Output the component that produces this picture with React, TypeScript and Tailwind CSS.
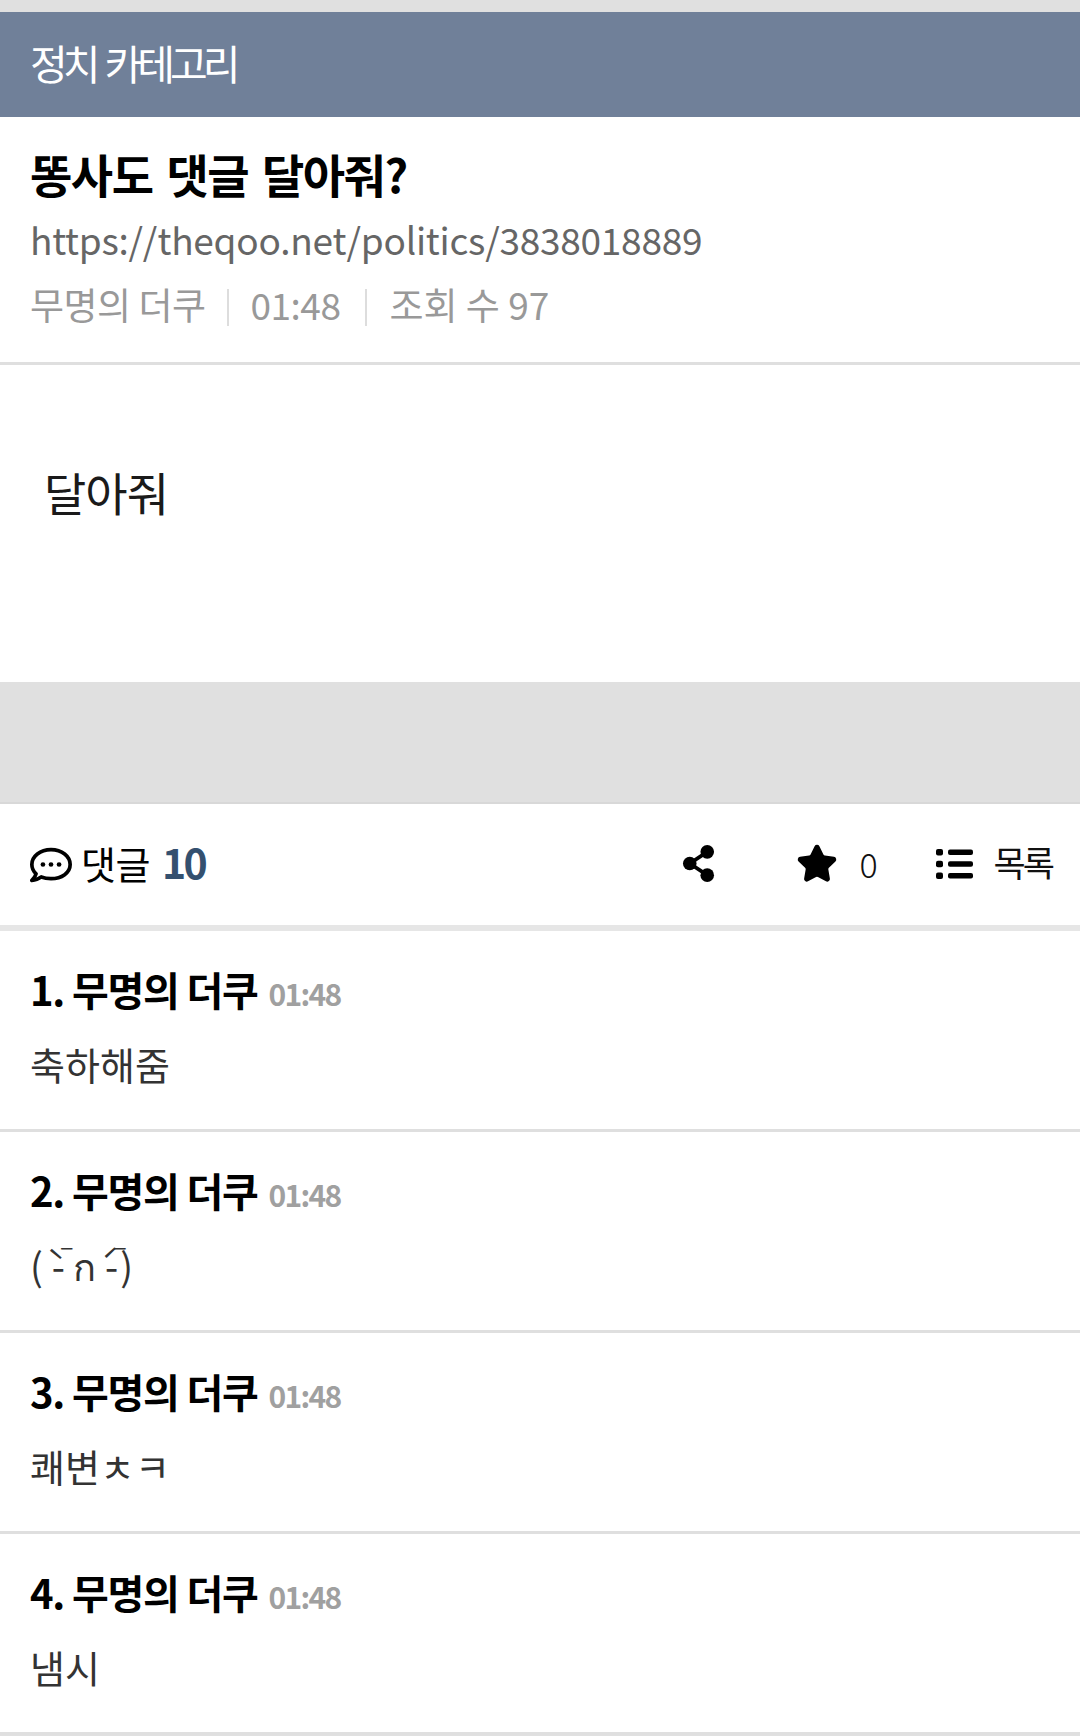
import type { ReactNode } from "react";
import { Star } from "lucide-react";

const font = { fontFamily: '"Noto Sans CJK KR", "Noto Sans", sans-serif' };

// dash with its accent sitting on top, the stacked marks don't shape well in the fallback fonts
function MarkedDash({ side }: { side: "left" | "right" }) {
  return (
    <span className="relative inline-block">
      -
      <span
        className={
          side === "left"
            ? "absolute top-[-5px] left-[-5px] text-[30px] leading-[54px]"
            : "absolute top-[-5px] right-[-1px] text-[30px] leading-[54px]"
        }
      >
        {side === "left" ? "ˋ" : "ˊ"}
      </span>
      <span className="absolute top-[-9px] left-[0px] text-[30px] leading-[54px]">ˉ</span>
    </span>
  );
}

const comments: { no: number; text: ReactNode }[] = [
  { no: 1, text: "축하해줌" },
  {
    no: 2,
    text: (
      <span className="inline-flex">
        <span>(</span>
        <span className="ml-[9px]">
          <MarkedDash side="left" />
        </span>
        <span className="ml-[8px]">ก</span>
        <span className="ml-[9px]">
          <MarkedDash side="right" />
        </span>
        <span className="ml-[2px]">)</span>
      </span>
    ),
  },
  { no: 3, text: "쾌변ㅊㅋ" },
  { no: 4, text: "냄시" },
];

function CommentItem({ no, text }: { no: number; text: ReactNode }) {
  return (
    <div className="h-[201px] border-b-[3px] border-[#dfdfdf] bg-white px-[30px] pt-[29px]">
      <div className="flex items-baseline">
        <span className="text-[40px] leading-[58px] font-bold tracking-[-1.25px] text-black">
          {no}. 무명의 더쿠
        </span>
        <span className="ml-[11px] text-[30px] font-bold tracking-[-1.75px] text-[#a0a0a0]">01:48</span>
      </div>
      <p className="mt-[19px] text-[38px] leading-[54px] text-[#333333]">{text}</p>
    </div>
  );
}

export default function App() {
  return (
    <div className="min-h-[1736px] bg-[#e0e0e0] pt-[12px]" style={font}>
      <div className="flex h-[105px] items-center bg-[#708099] px-[30px] pb-[3px] text-[41px] tracking-[-5px] [word-spacing:5px] text-white">
        정치 카테고리
      </div>
      <div className="h-[248px] border-b-[3px] border-[#dfdfdf] bg-white px-[30px] pt-[24px]">
        <h1 className="text-[46px] leading-[64px] font-bold tracking-[-1.5px] [word-spacing:5px] text-black">
          똥사도 댓글 달아줘?
        </h1>
        <p className="mt-[7px] text-[37px] leading-[54px] tracking-[-0.25px] text-[#666666]">
          https://theqoo.net/politics/3838018889
        </p>
        <div className="mt-[11px] flex items-center text-[37px] leading-[54px] tracking-[-0.5px] text-[#999999]">
          <span>무명의 더쿠</span>
          <span className="mr-[22px] ml-[21px] mt-[6px] h-[37px] w-[2px] bg-[#dddddd]" />
          <span>01:48</span>
          <span className="mr-[22px] ml-[25px] mt-[6px] h-[37px] w-[2px] bg-[#dddddd]" />
          <span className="tracking-[0px]">조회 수 97</span>
        </div>
      </div>
      <div className="h-[317px] bg-white pl-[44px] pt-[94px]">
        <p className="text-[46px] leading-[64px] tracking-[-1px] text-[#1a1a1a]">달아줘</p>
      </div>
      <div className="h-[122px] border-b-2 border-[#d8d8d8]" />
      <div className="flex h-[121px] items-center bg-white pl-[30px] pr-[28px]">
        <svg viewBox="6 26 500 412" className="h-[36px] w-[42px]" fill="none">
          <path
            d="M256 48C127 48 28 128 28 226c0 42 18 80 50 110-8 32-26 58-50 80 40-2 82-18 112-42 36 14 76 20 116 20 129 0 228-70 228-168S385 48 256 48z"
            stroke="#000"
            strokeWidth="44"
            strokeLinejoin="round"
          />
          <circle cx="160" cy="226" r="28" fill="#000" />
          <circle cx="256" cy="226" r="28" fill="#000" />
          <circle cx="352" cy="226" r="28" fill="#000" />
        </svg>
        <span className="mb-[5px] ml-[9px] text-[38px] tracking-[-0.5px] text-black">댓글</span>
        <span className="mb-[5px] ml-[12px] text-[41px] font-bold tracking-[-2.5px] text-[#34506f]">10</span>
        <div className="mb-[2px] ml-auto flex items-center">
          <svg viewBox="0 0 34 38" className="h-[37px] w-[33px]" fill="#000">
            <circle cx="26" cy="7" r="7" />
            <circle cx="26" cy="31" r="7" />
            <circle cx="8" cy="19" r="7" />
            <path d="M8 19L26 7M8 19l18 12" stroke="#000" strokeWidth="4" />
          </svg>
          <Star className="ml-[81px] h-[42px] w-[42px]" fill="#000" strokeWidth={2} />
          <span className="ml-[21px] text-[34px] font-light text-[#111111]">0</span>
          <svg viewBox="0 0 37 30" className="ml-[58px] h-[30px] w-[37px]" fill="#000">
            <rect x="0" y="0" width="7" height="6.5" rx="2" />
            <rect x="0" y="11.7" width="7" height="6.5" rx="2" />
            <rect x="0" y="23.5" width="7" height="6.5" rx="2" />
            <rect x="12" y="0.5" width="25" height="5.5" rx="2" />
            <rect x="12" y="12.2" width="25" height="5.5" rx="2" />
            <rect x="12" y="24" width="25" height="5.5" rx="2" />
          </svg>
          <span className="mb-[3px] ml-[21px] text-[35px] tracking-[-3px] text-[#111111]">목록</span>
        </div>
      </div>
      <div className="h-[6px] bg-[#e6e6e6]" />
      {comments.map((c) => (
        <CommentItem key={c.no} no={c.no} text={c.text} />
      ))}
    </div>
  );
}
